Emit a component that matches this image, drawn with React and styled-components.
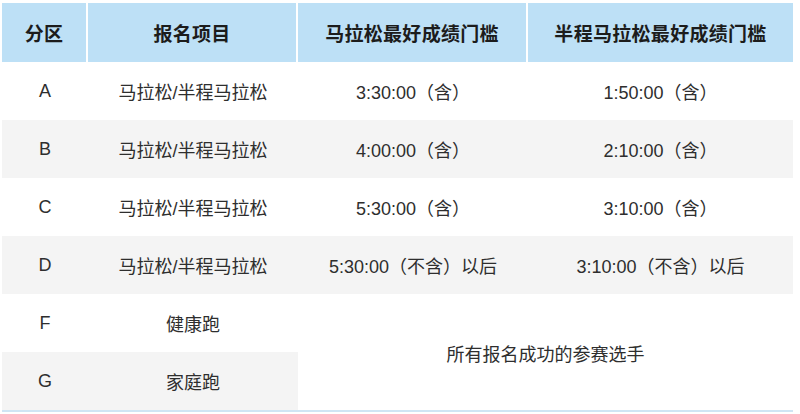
import React from "react";
import styled, { createGlobalStyle } from "styled-components";

const Global = createGlobalStyle`
  html, body { margin: 0; padding: 0; background: #ffffff; }
  body { padding: 3px 7px 0 2px; }
`;

const Table = styled.div`
  display: grid;
  grid-template-columns: 86px 210px 230px 265px;
  grid-template-rows: 59px repeat(6, 58px);
  width: 791px;
  border-bottom: 2px solid #cfe5f4;
  font-family: "Liberation Sans", "Noto Sans CJK SC", sans-serif;
`;

const HeadCell = styled.div`
  display: flex;
  align-items: center;
  justify-content: center;
  background: #bde0f6;
  color: #1c1c1c;
  font-weight: 700;
  font-size: 19px;
  letter-spacing: 0.3px;
  border-right: ${(p) => (p.$last ? "none" : "2px solid #ffffff")};
`;

const Cell = styled.div`
  display: flex;
  align-items: center;
  justify-content: center;
  background: ${(p) => (p.$shade ? "#f4f4f4" : "#ffffff")};
  color: #2e2e2e;
  font-size: 18px;
`;

const Merged = styled(Cell)`
  grid-column: 3 / 5;
  grid-row: span 2;
  background: #ffffff;
  padding-top: 2px;
`;

const headers = ["分区", "报名项目", "马拉松最好成绩门槛", "半程马拉松最好成绩门槛"];

const rows = [
  ["A", "马拉松/半程马拉松", "3:30:00（含）", "1:50:00（含）"],
  ["B", "马拉松/半程马拉松", "4:00:00（含）", "2:10:00（含）"],
  ["C", "马拉松/半程马拉松", "5:30:00（含）", "3:10:00（含）"],
  ["D", "马拉松/半程马拉松", "5:30:00（不含）以后", "3:10:00（不含）以后"],
];

export default function App() {
  return (
    <>
      <Global />
      <Table>
        {headers.map((h, i) => (
          <HeadCell key={h} $last={i === headers.length - 1}>
            {h}
          </HeadCell>
        ))}
        {rows.map((r, ri) =>
          r.map((c, ci) => (
            <Cell key={`${ri}-${ci}`} $shade={ri % 2 === 1}>
              {c}
            </Cell>
          ))
        )}
        <Cell>F</Cell>
        <Cell>健康跑</Cell>
        <Merged>所有报名成功的参赛选手</Merged>
        <Cell $shade>G</Cell>
        <Cell $shade>家庭跑</Cell>
      </Table>
    </>
  );
}
